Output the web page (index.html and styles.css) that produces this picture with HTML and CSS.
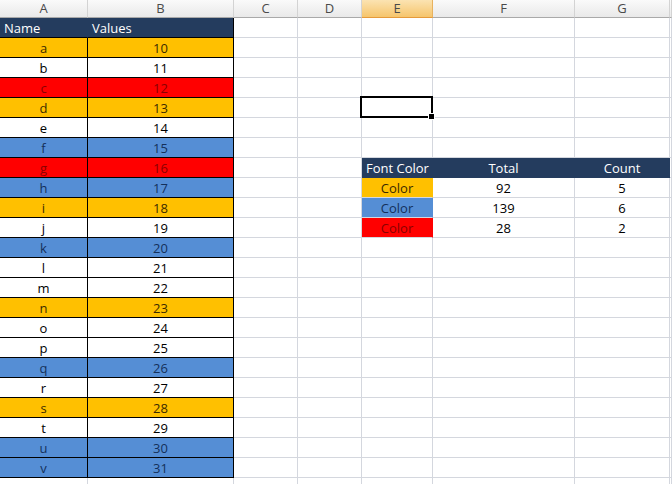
FILE: index.html
```html
<!DOCTYPE html>
<html>
<head>
<meta charset="utf-8">
<link rel="stylesheet" href="styles.css">
</head>
<body>
<div class="sheet">
  <div class="row colhead">
    <div class="ch">A</div><div class="ch">B</div><div class="ch">C</div><div class="ch">D</div><div class="ch sel">E</div><div class="ch">F</div><div class="ch">G</div><div class="ch"></div>
  </div>
  <div class="row"><div class="c ta hd l">Name</div><div class="c tb hd l">Values</div><div class="c"></div><div class="c"></div><div class="c"></div><div class="c"></div><div class="c"></div><div class="c"></div></div>
  <div class="row"><div class="c ta or">a</div><div class="c tb or">10</div><div class="c"></div><div class="c"></div><div class="c"></div><div class="c"></div><div class="c"></div><div class="c"></div></div>
  <div class="row"><div class="c ta">b</div><div class="c tb">11</div><div class="c"></div><div class="c"></div><div class="c"></div><div class="c"></div><div class="c"></div><div class="c"></div></div>
  <div class="row"><div class="c ta rd">c</div><div class="c tb rd">12</div><div class="c"></div><div class="c"></div><div class="c"></div><div class="c"></div><div class="c"></div><div class="c"></div></div>
  <div class="row"><div class="c ta or">d</div><div class="c tb or">13</div><div class="c"></div><div class="c"></div><div class="c active"></div><div class="c"></div><div class="c"></div><div class="c"></div></div>
  <div class="row"><div class="c ta">e</div><div class="c tb">14</div><div class="c"></div><div class="c"></div><div class="c"></div><div class="c"></div><div class="c"></div><div class="c"></div></div>
  <div class="row"><div class="c ta bl">f</div><div class="c tb bl">15</div><div class="c"></div><div class="c"></div><div class="c"></div><div class="c"></div><div class="c"></div><div class="c"></div></div>
  <div class="row"><div class="c ta rd">g</div><div class="c tb rd">16</div><div class="c"></div><div class="c"></div><div class="c hd l">Font Color</div><div class="c hd">Total</div><div class="c hd">Count</div><div class="c"></div></div>
  <div class="row"><div class="c ta bl">h</div><div class="c tb bl">17</div><div class="c"></div><div class="c"></div><div class="c or">Color</div><div class="c">92</div><div class="c">5</div><div class="c"></div></div>
  <div class="row"><div class="c ta or">i</div><div class="c tb or">18</div><div class="c"></div><div class="c"></div><div class="c bl">Color</div><div class="c">139</div><div class="c">6</div><div class="c"></div></div>
  <div class="row"><div class="c ta">j</div><div class="c tb">19</div><div class="c"></div><div class="c"></div><div class="c rd">Color</div><div class="c">28</div><div class="c">2</div><div class="c"></div></div>
  <div class="row"><div class="c ta bl">k</div><div class="c tb bl">20</div><div class="c"></div><div class="c"></div><div class="c"></div><div class="c"></div><div class="c"></div><div class="c"></div></div>
  <div class="row"><div class="c ta">l</div><div class="c tb">21</div><div class="c"></div><div class="c"></div><div class="c"></div><div class="c"></div><div class="c"></div><div class="c"></div></div>
  <div class="row"><div class="c ta">m</div><div class="c tb">22</div><div class="c"></div><div class="c"></div><div class="c"></div><div class="c"></div><div class="c"></div><div class="c"></div></div>
  <div class="row"><div class="c ta or">n</div><div class="c tb or">23</div><div class="c"></div><div class="c"></div><div class="c"></div><div class="c"></div><div class="c"></div><div class="c"></div></div>
  <div class="row"><div class="c ta">o</div><div class="c tb">24</div><div class="c"></div><div class="c"></div><div class="c"></div><div class="c"></div><div class="c"></div><div class="c"></div></div>
  <div class="row"><div class="c ta">p</div><div class="c tb">25</div><div class="c"></div><div class="c"></div><div class="c"></div><div class="c"></div><div class="c"></div><div class="c"></div></div>
  <div class="row"><div class="c ta bl">q</div><div class="c tb bl">26</div><div class="c"></div><div class="c"></div><div class="c"></div><div class="c"></div><div class="c"></div><div class="c"></div></div>
  <div class="row"><div class="c ta">r</div><div class="c tb">27</div><div class="c"></div><div class="c"></div><div class="c"></div><div class="c"></div><div class="c"></div><div class="c"></div></div>
  <div class="row"><div class="c ta or">s</div><div class="c tb or">28</div><div class="c"></div><div class="c"></div><div class="c"></div><div class="c"></div><div class="c"></div><div class="c"></div></div>
  <div class="row"><div class="c ta">t</div><div class="c tb">29</div><div class="c"></div><div class="c"></div><div class="c"></div><div class="c"></div><div class="c"></div><div class="c"></div></div>
  <div class="row"><div class="c ta bl">u</div><div class="c tb bl">30</div><div class="c"></div><div class="c"></div><div class="c"></div><div class="c"></div><div class="c"></div><div class="c"></div></div>
  <div class="row"><div class="c ta bl">v</div><div class="c tb bl">31</div><div class="c"></div><div class="c"></div><div class="c"></div><div class="c"></div><div class="c"></div><div class="c"></div></div>
  <div class="row"><div class="c"></div><div class="c"></div><div class="c"></div><div class="c"></div><div class="c"></div><div class="c"></div><div class="c"></div><div class="c"></div></div>
</div>
</body>
</html>
```
FILE: styles.css
```css
html, body {
  margin: 0;
  padding: 0;
  background: #ffffff;
  overflow: hidden;
}
.sheet {
  width: 672px;
  height: 484px;
  overflow: hidden;
  font-family: "Open Sans", "Liberation Sans", sans-serif;
  font-size: 13px;
  color: #000000;
}
.row {
  display: grid;
  grid-template-columns: 88px 146px 64px 64px 71px 142px 95px 1fr;
  height: 20px;
}
.colhead {
  height: 18px;
}
.ch {
  box-sizing: border-box;
  height: 18px;
  border-right: 1px solid #d3d3d3;
  border-bottom: 1px solid #a9a9a9;
  background: linear-gradient(#fafafa, #e9e9e9);
  color: #4a4a4a;
  text-align: center;
  line-height: 17px;
  font-size: 13px;
}
.ch.sel {
  background: linear-gradient(#fbe3b2, #f6c56c);
  border-bottom-color: #e59a3a;
  border-right-color: #e8b25e;
}
.c {
  box-sizing: border-box;
  height: 20px;
  border-right: 1px solid #d4d7de;
  border-bottom: 1px solid #d4d7de;
  text-align: center;
  line-height: 20px;
  white-space: nowrap;
  overflow: hidden;
}
.ta, .tb {
  border-right-color: #000000;
  border-bottom-color: #000000;
}
.l {
  text-align: left;
  padding-left: 4px;
}
.hd {
  background: #243c5e;
  color: #ffffff;
  border-right-color: #243c5e;
  border-bottom-color: #243c5e;
}
.ta.hd, .tb.hd {
  border-bottom-color: #000000;
}
.tb.hd {
  border-right-color: #000000;
}
.or {
  background: #ffc000;
  color: #3a2a00;
}
.bl {
  background: #558ed5;
  color: #14305a;
}
.rd {
  background: #ff0000;
  color: #8a0000;
}
.c.or:not(.ta):not(.tb), .c.bl:not(.ta):not(.tb), .c.rd:not(.ta):not(.tb) {
  border-right-color: transparent;
}
.active {
  position: relative;
  overflow: visible;
}
.active::before {
  content: "";
  position: absolute;
  left: -2px;
  top: -2px;
  right: -1px;
  bottom: -1px;
  border: 2px solid #000000;
}
.active::after {
  content: "";
  position: absolute;
  right: -3px;
  bottom: -3px;
  width: 5px;
  height: 5px;
  background: #000000;
  border: 1px solid #ffffff;
}
```
